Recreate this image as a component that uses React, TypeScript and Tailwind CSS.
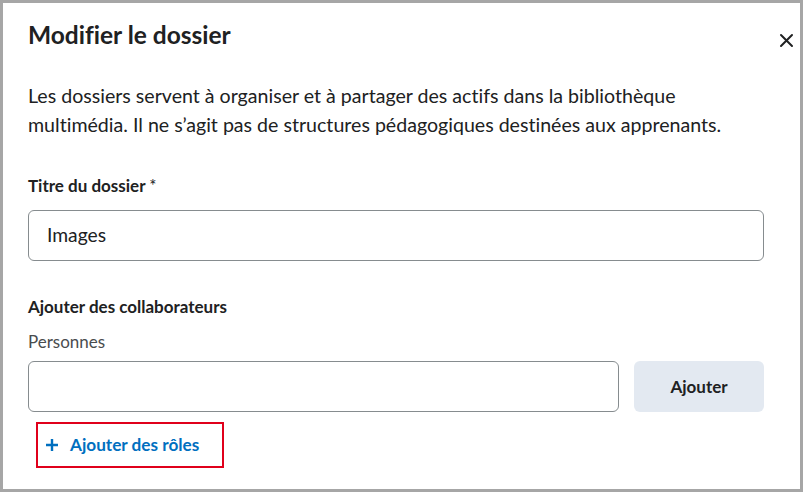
export default function App() {
  return (
    <div
      className="w-[803px] h-[492px] border-[3px] border-[#a6a6a6] bg-white text-[#202122] overflow-hidden [font-variant-ligatures:none]"
      style={{ fontFamily: 'Lato, "Noto Sans", sans-serif' }}
    >
      <div className="flex items-start justify-between pl-[25px] pr-[2px] pt-[17px]">
        <h1 className="text-[24.5px] font-bold leading-[30px]">Modifier le dossier</h1>
        <button className="mt-[8px] w-[24px] h-[24px] flex items-center justify-center text-[#202122]">
          <svg width="15" height="15" viewBox="0 0 15 15" fill="none" stroke="currentColor" strokeWidth="2" strokeLinecap="round">
            <path d="M2 2L13 13M13 2L2 13" />
          </svg>
        </button>
      </div>

      <div className="pl-[25px] pr-[36px]">
        <p className="mt-[29px] text-[19.6px] leading-[29px] whitespace-nowrap">
          Les dossiers servent à organiser et à partager des actifs dans la bibliothèque
          <br />
          multimédia. Il ne s’agit pas de structures pédagogiques destinées aux apprenants.
        </p>

        <label className="block mt-[36px] text-[17px] font-bold leading-[22px]">
          Titre du dossier <span className="font-normal">*</span>
        </label>
        <div className="mt-[13px] h-[51px] rounded-[6px] border border-[#868c8f] flex items-center px-[18px] text-[19.3px]">
          Images
        </div>

        <div className="mt-[35px] text-[17px] font-bold leading-[22px]">Ajouter des collaborateurs</div>
        <div className="mt-[13px] text-[17px] leading-[22px] text-[#494c4e]">Personnes</div>

        <div className="mt-[8px] flex gap-[15px]">
          <div className="flex-1 h-[51px] rounded-[6px] border border-[#868c8f]" />
          <button className="w-[130px] h-[51px] rounded-[6px] bg-[#e3e9f1] text-[17px] font-bold text-[#202122]">
            Ajouter
          </button>
        </div>

        <div className="mt-[10px] ml-[8px] w-[188px] h-[46px] border-2 border-[#e0001b] flex items-center pl-[7px] gap-[11px] text-[#006fbf]">
          <svg width="14" height="14" viewBox="0 0 14 14" fill="none" stroke="currentColor" strokeWidth="2.4">
            <path d="M7 1V13M1 7H13" />
          </svg>
          <span className="text-[17.2px] font-bold">Ajouter des rôles</span>
        </div>
      </div>
    </div>
  );
}
